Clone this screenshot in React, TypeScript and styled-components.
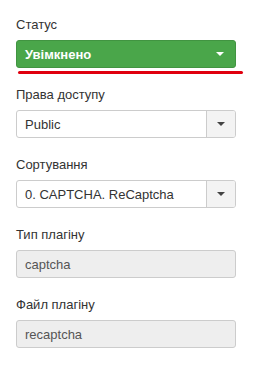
import React from "react";
import styled, { createGlobalStyle } from "styled-components";

const GlobalStyle = createGlobalStyle`
  body {
    margin: 0;
    background: #ffffff;
    font-family: "Liberation Sans", Arial, sans-serif;
  }
`;

const Caret: React.FC<{ color: string }> = ({ color }) => (
  <svg width="8" height="4" viewBox="0 0 8 4">
    <path d="M0 0 L8 0 L4 4 Z" fill={color} />
  </svg>
);

const App: React.FC = () => {
  return (
    <>
      <GlobalStyle />
      <Panel>
        <Field>
          <Label>Статус</Label>
          <StatusSelect>
            <span>Увімкнено</span>
            <Caret color="#ffffff" />
          </StatusSelect>
          <Underline />
        </Field>
        <Field>
          <Label>Права доступу</Label>
          <Chosen>
            <Value>Public</Value>
            <Toggle>
              <Caret color="#444444" />
            </Toggle>
          </Chosen>
        </Field>
        <Field>
          <Label>Сортування</Label>
          <Chosen>
            <Value>0. CAPTCHA. ReCaptcha</Value>
            <Toggle>
              <Caret color="#444444" />
            </Toggle>
          </Chosen>
        </Field>
        <Field>
          <Label>Тип плагіну</Label>
          <ReadOnly>captcha</ReadOnly>
        </Field>
        <Field>
          <Label>Файл плагіну</Label>
          <ReadOnly>recaptcha</ReadOnly>
        </Field>
      </Panel>
    </>
  );
};

export default App;

const Panel = styled.div`
  width: 220px;
  padding: 16px 0 0 16px;
  display: flex;
  flex-direction: column;
  gap: 18px;
`;

const Field = styled.div`
  position: relative;
  display: flex;
  flex-direction: column;
`;

const Label = styled.div`
  font-size: 13px;
  line-height: 18px;
  color: #333333;
  margin-bottom: 6px;
`;

const StatusSelect = styled.div`
  height: 28px;
  box-sizing: border-box;
  display: flex;
  align-items: center;
  justify-content: space-between;
  padding: 0 11px 0 8px;
  background: #4aa64a;
  border: 1px solid #419441;
  border-radius: 3px;
  color: #ffffff;
  font-size: 13px;
  font-weight: bold;
`;

const Underline = styled.div`
  position: absolute;
  left: 2px;
  bottom: -6px;
  width: 225px;
  height: 3px;
  background: #e0000f;
  border-radius: 2px;
`;

const Chosen = styled.div`
  height: 28px;
  box-sizing: border-box;
  display: flex;
  align-items: stretch;
  background: #ffffff;
  border: 1px solid #cccccc;
  border-radius: 3px;
  overflow: hidden;
`;

const Value = styled.div`
  flex: 1;
  display: flex;
  align-items: center;
  padding-left: 8px;
  font-size: 13px;
  color: #333333;
`;

const Toggle = styled.div`
  width: 28px;
  display: flex;
  align-items: center;
  justify-content: center;
  border-left: 1px solid #cccccc;
  background: #f3f3f3;
`;

const ReadOnly = styled.div`
  height: 28px;
  box-sizing: border-box;
  display: flex;
  align-items: center;
  padding-left: 8px;
  background: #eeeeee;
  border: 1px solid #cccccc;
  border-radius: 3px;
  font-size: 13px;
  color: #555555;
`;
